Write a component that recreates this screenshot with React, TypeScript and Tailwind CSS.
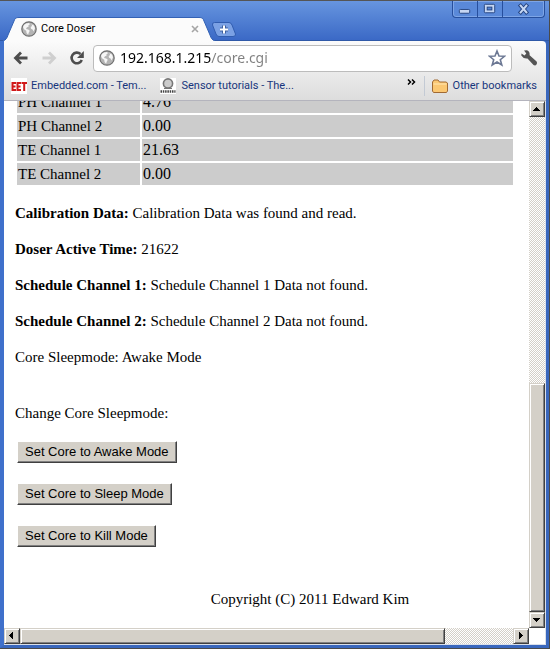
import type { ReactNode } from "react";

const READINGS = [
  { name: "PH Channel 1", value: "4.76" },
  { name: "PH Channel 2", value: "0.00" },
  { name: "TE Channel 1", value: "21.63" },
  { name: "TE Channel 2", value: "0.00" },
];

const STATUS_LINES = [
  { label: "Calibration Data:", text: "Calibration Data was found and read." },
  { label: "Doser Active Time:", text: "21622" },
  { label: "Schedule Channel 1:", text: "Schedule Channel 1 Data not found." },
  { label: "Schedule Channel 2:", text: "Schedule Channel 2 Data not found." },
];

const MODES = ["Awake", "Sleep", "Kill"];

function GlobeIcon() {
  return (
    <svg viewBox="0 0 16 16" className="size-4 shrink-0" aria-hidden="true">
      <circle cx="8" cy="8" r="7.2" fill="#b4b4b4" stroke="#6f6f6f" strokeWidth="1.2" />
      <path d="M3 4 5 2.4 8 2l1 1.3-1.6.9.3 1.4-1.9.8L5 8l2.2.4 1.6 1.4-1 1.6-.7 2.4L5.6 12l-.4-2.2L3 8.2 2 6z" fill="#f6f6f6" />
      <path d="M10.5 3.2 13 4.6l1 2.6-1.4 3.2-1-2-1.6-.6-.3-1.8 1.4-1z" fill="#f6f6f6" />
    </svg>
  );
}

function WindowControls() {
  return (
    <div className="mr-1 flex h-[17px] rounded-b border border-t-0 border-[#274f9d] bg-[#5a89d9] shadow-[inset_0_0_0_1px_#7ea5e6]">
      <button type="button" aria-label="Minimize" className="w-[25px] border-r border-[#274f9d]">
        <svg viewBox="0 0 25 17" className="h-4 w-full">
          <rect x="6.5" y="9" width="11" height="4" rx="1" fill="#c5d6f3" stroke="#24437f" />
        </svg>
      </button>
      <button type="button" aria-label="Maximize" className="w-[25px] border-r border-[#274f9d]">
        <svg viewBox="0 0 25 17" className="h-4 w-full">
          <rect x="6.5" y="3.5" width="11" height="9" rx="1" fill="#c5d6f3" stroke="#24437f" />
          <rect x="9.5" y="6.5" width="5" height="3" fill="#5585d6" stroke="#24437f" />
        </svg>
      </button>
      <button type="button" aria-label="Close window" className="w-[41px]">
        <svg viewBox="0 0 41 17" className="h-4 w-full">
          <path d="m17.500 5 6 7m0-7-6 7" stroke="#24437f" strokeWidth="4.2" strokeLinecap="square" />
          <path d="m17.500 5 6 7m0-7-6 7" stroke="#c5d6f3" strokeWidth="2.2" strokeLinecap="square" />
        </svg>
      </button>
    </div>
  );
}

function TabStrip() {
  return (
    <div className="flex h-[41px] justify-between border-t border-b border-t-[#555] border-b-[#2f59a8] bg-linear-to-b from-[#6795df] to-[#3b69c6]">
      <div className="-mb-px flex items-end pl-[3px]">
        <div className="relative flex h-6 w-[212px] items-center pr-4 pl-[18px]">
          <svg viewBox="0 0 212 24" preserveAspectRatio="none" className="absolute inset-0 size-full" aria-hidden="true">
            <path d="M0 24C3 23 4 21 5 18L11 4C12 1 13 .5 16 .5H196C199 .5 200 1 201 4L207 18C208 21 209 23 212 24" fill="#fbfbfb" stroke="#3261b4" />
          </svg>
          <span className="relative flex flex-1 items-center gap-1 text-black">
            <GlobeIcon />
            <span>Core Doser</span>
          </span>
          <button type="button" aria-label="Close tab" className="relative">
            <svg viewBox="0 0 8 8" className="size-2">
              <path d="m1 1 6 6m0-6L1 7" stroke="#a5a5a5" strokeWidth="1.6" />
            </svg>
          </button>
        </div>
        <button type="button" aria-label="New tab" className="-ml-1 h-5">
          <svg viewBox="0 0 26 20" className="h-5 w-[26px]">
            <path d="M3.5 1.5H18Q20 1.5 21 4L24.5 13Q25 15.5 22 15.5H8Q6 15.5 5 13L1.5 4Q1 1.5 3.5 1.5Z" fill="#7ba1e4" stroke="#315db0" />
            <path d="M13 4.500v8M9 8.500h8" stroke="#3c5f9e" strokeWidth="4" />
            <path d="M13 4.500v8M9 8.500h8" stroke="#fff" strokeWidth="2" />
          </svg>
        </button>
      </div>
      <WindowControls />
    </div>
  );
}

function Toolbar() {
  return (
    <div className="flex h-[34px] items-center pr-2 pl-[9px]">
      <button type="button" aria-label="Back" className="mr-3">
        <svg viewBox="0 0 16 16" className="size-4" fill="none" stroke="#4d4d4d" strokeWidth="2.8">
          <path d="M8 2.5 2.5 8 8 13.5M3 8h11.5" />
        </svg>
      </button>
      <button type="button" aria-label="Forward" className="mr-3">
        <svg viewBox="0 0 16 16" className="size-4" fill="none" stroke="#cfcfcf" strokeWidth="2.8">
          <path d="M8 2.5 13.5 8 8 13.5M13 8H1.5" />
        </svg>
      </button>
      <button type="button" aria-label="Reload" className="mr-2">
        <svg viewBox="0 0 16 16" className="size-4">
          <path d="M11.5 4A5.3 5.3 0 1 0 12.8 10" fill="none" stroke="#4d4d4d" strokeWidth="2.6" />
          <path d="M14.8 1v7H8z" fill="#4d4d4d" />
        </svg>
      </button>
      <div className="flex h-[27px] min-w-0 flex-1 items-center gap-[5px] rounded border border-[#bcbcbc] bg-white px-[5px]">
        <GlobeIcon />
        {/* host stays dark, path is greyed out */}
        <input
          aria-label="Address"
          defaultValue="192.168.1.215/core.cgi"
          className="h-6 min-w-0 flex-1 bg-linear-to-r from-black from-[91px] to-[#808080] to-[91px] bg-clip-text font-['Noto_Sans','Open_Sans',sans-serif] text-[14px] leading-6 text-transparent caret-black outline-none"
        />
        <button type="button" aria-label="Bookmark this page">
          <svg viewBox="0 0 18 18" className="size-[18px]">
            <path d="m9 2 2 5 5.5.3-4.2 3.4 1.5 5.3L9 13l-4.8 3 1.5-5.3L1.5 7.3 7 7z" fill="#fff" stroke="#6c7894" strokeWidth="1.6" />
          </svg>
        </button>
      </div>
      <button type="button" aria-label="Settings" className="ml-2">
        <svg viewBox="0 0 18 18" className="size-[18px]">
          <path d="M4 1.5 7 1.3Q10 2.5 9.6 6.3L16.6 12.5Q17.6 14 16.5 15.5T13.5 16L7.5 9.5Q3.5 10.1 1.3 6.5L1.5 4.5 4.5 6.5 6.3 4.5Z" fill="#555" />
        </svg>
      </button>
    </div>
  );
}

function BookmarksBar() {
  return (
    <nav className="flex h-[26px] items-center border-b border-[#b4b4bd] pr-[10px] pb-1 pl-[7px] text-[#17357c]">
      <a href="#embedded" className="flex items-center gap-1">
        <svg viewBox="0 0 16 16" className="size-4" aria-hidden="true">
          <path d="M0 0h16v16H0z" fill="#fff" />
          <path d="M1.5 4v9M1 5h4M1 8.5h3.5M1 12h4M6.5 4v9M6 5h4M6 8.5h3.5M6 12h4M10.5 5H16M13.2 5v8" stroke="#d11a1a" strokeWidth="2" />
        </svg>
        Embedded.com - Tem...
      </a>
      <a href="#sensor" className="ml-[14px] flex items-center gap-[5px]">
        <svg viewBox="0 0 16 16" className="size-4" aria-hidden="true">
          <path d="M0 0h16v16H0z" fill="#fff" />
          <circle cx="8" cy="5.5" r="4.6" fill="#ccc" stroke="#777" strokeWidth="1.6" />
          <path d="M4 10.5h8" stroke="#777" />
          <path d="M.5 13.5h15" stroke="#444" strokeWidth="2.5" strokeDasharray="1.5 .8" />
        </svg>
        Sensor tutorials - The...
      </a>
      <button type="button" aria-label="More bookmarks" className="mb-2 ml-auto">
        <svg viewBox="0 0 9 6" className="h-[6px] w-[9px]" fill="none" stroke="#000" strokeWidth="1.5">
          <path d="m1 .5 2.500 2.500L1 5.500M5 .5 7.500 3 5 5.500" />
        </svg>
      </button>
      <span className="mr-[7px] ml-2 h-5 w-px bg-[#c3cad4]" />
      <a href="#other" className="-mr-px flex items-center gap-[5px]">
        <svg viewBox="0 0 16 14" className="h-[14px] w-4" aria-hidden="true">
          <path d="M.5 12V3L2 1h4l1.5 2H14l1.5 1V12l-1 1.500h-13z" fill="#fbc873" stroke="#a06a35" />
          <path d="M1.5 5h13" stroke="#ffe7b5" />
        </svg>
        Other bookmarks
      </a>
    </nav>
  );
}

const BEVEL =
  "border border-t-[#d4d0c8] border-l-[#d4d0c8] border-r-[#404040] border-b-[#404040] bg-[#d4d0c8] shadow-[inset_1px_1px_#fff,inset_-1px_-1px_#808080]";

const TRACK =
  "flex flex-1 bg-[repeating-conic-gradient(#d4d0c8_0_25%,#fff_0_50%)] bg-size-[2px_2px]";

function ArrowButton({ label, d }: { label: string; d: string }) {
  return (
    <button type="button" aria-label={label} className={`size-4 shrink-0 ${BEVEL}`}>
      <svg viewBox="0 0 14 14" className="size-[14px]" shapeRendering="crispEdges">
        <path d={d} />
      </svg>
    </button>
  );
}

function VerticalScrollbar() {
  return (
    <div className="flex w-4 shrink-0 flex-col">
      <ArrowButton label="Scroll up" d="M3 9h7L6.500 5z" />
      <div className={`flex-col ${TRACK}`}>
        <div className="flex-[267]" />
        <div className={`flex-[228] ${BEVEL}`} />
      </div>
      <ArrowButton label="Scroll down" d="M3 5h7L6.500 9z" />
    </div>
  );
}

function HorizontalScrollbar() {
  return (
    <div className="flex h-4 pr-4">
      <ArrowButton label="Scroll left" d="M8 3v7L4 6.500z" />
      <div className={TRACK}>
        <div className={`flex-[424] ${BEVEL}`} />
        <div className="flex-[68]" />
      </div>
      <ArrowButton label="Scroll right" d="M5 3v7l4-3.500z" />
    </div>
  );
}

function FormButton({ children }: { children: ReactNode }) {
  return (
    <button
      type="button"
      className="ml-[2px] h-[22px] border border-t-white border-r-[#404040] border-b-[#404040] border-l-white bg-[#d4d0c8] px-[7px] font-['Liberation_Sans',Arial,sans-serif] text-[13px] leading-5 text-black shadow-[inset_-1px_-1px_#808080]"
    >
      {children}
    </button>
  );
}

function DoserPage() {
  return (
    <main className="w-[609px] pr-2 pb-[19px] pl-[11px] font-['Liberation_Serif','Times_New_Roman',serif] text-[15px] leading-5 text-black">
      {/* the page is scrolled down, so the first row is partly hidden */}
      <table className="-mt-3 w-[500px] table-fixed border-separate border-spacing-[2px]">
        <tbody>
          {READINGS.map((reading) => (
            <tr key={reading.name} className="bg-[#ccc]">
              <td className="w-[123px] p-px">{reading.name}</td>
              <td className="p-px text-[16px]">{reading.value}</td>
            </tr>
          ))}
        </tbody>
      </table>
      <div className="mt-4 flex flex-col gap-4">
        {STATUS_LINES.map((line) => (
          <p key={line.label}>
            <b>{line.label}</b> {line.text}
          </p>
        ))}
        <p>Core Sleepmode: Awake Mode</p>
      </div>
      <p className="mt-9">Change Core Sleepmode:</p>
      <div className="mt-[18px] flex flex-col items-start gap-5">
        {MODES.map((mode) => (
          <FormButton key={mode}>Set Core to {mode} Mode</FormButton>
        ))}
      </div>
      <footer className="mt-[42px] text-center">Copyright (C) 2011 Edward Kim</footer>
    </main>
  );
}

export default function App() {
  return (
    <div className="flex min-h-screen flex-col border-r border-b border-[#4a4a4a] bg-[#3d6cc6] font-[Roboto,sans-serif] text-[11px] leading-4">
      <TabStrip />
      <div className="flex flex-1 flex-col border-r-3 border-b-3 border-l-4 border-r-[#3967bd] border-b-[#3967bd] border-l-[#3f70cb]">
        <header className="rounded-tr-sm bg-linear-to-b from-[#fbfbfb] to-[#dcdcdc]">
          <Toolbar />
          <BookmarksBar />
        </header>
        <div className="flex flex-1 flex-col border-r border-b border-[#d9dfea] bg-white">
          <div className="flex flex-1">
            <div className="min-w-0 flex-1 overflow-hidden">
              <DoserPage />
            </div>
            <VerticalScrollbar />
          </div>
          <HorizontalScrollbar />
        </div>
      </div>
    </div>
  );
}
